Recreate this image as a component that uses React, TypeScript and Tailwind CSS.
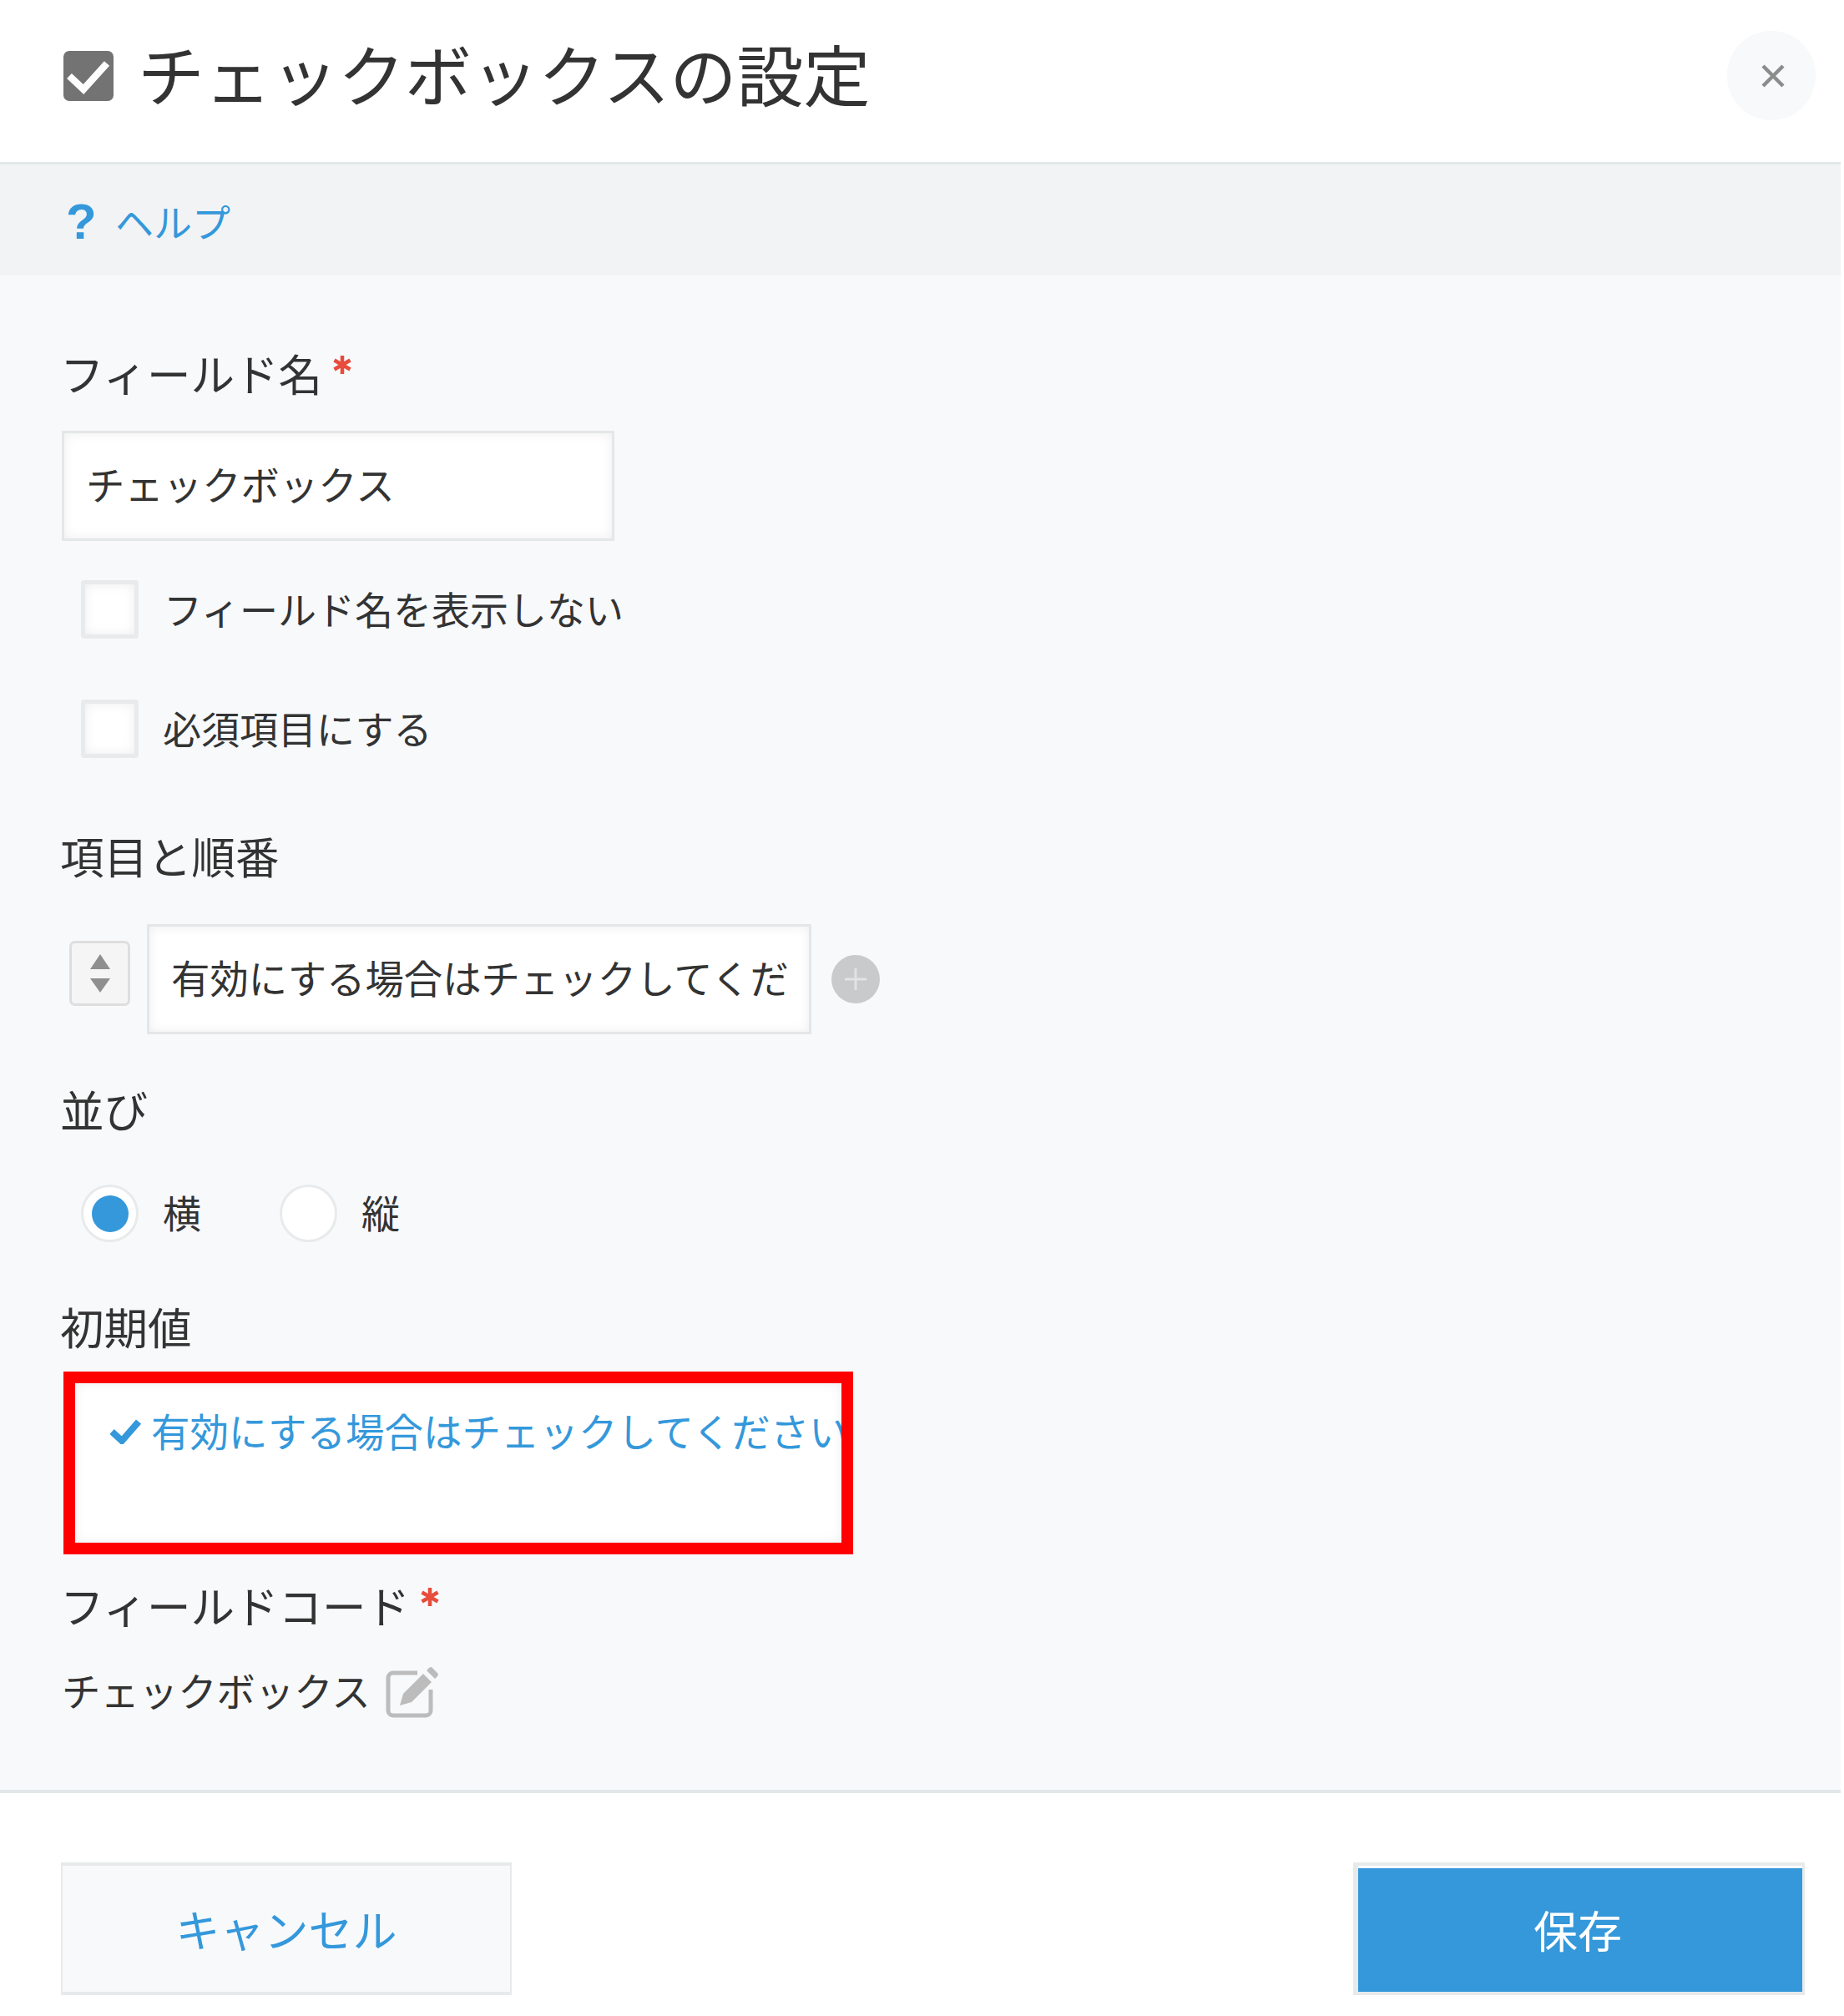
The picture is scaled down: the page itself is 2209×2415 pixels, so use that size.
const inputShadow = 'shadow-[inset_0_0_14px_rgba(0,0,0,0.07)]';

function FieldLabel({ text, required, className }: { text: string; required?: boolean; className: string }) {
  return (
    <div className={`-ml-[2px] flex h-[60px] items-center text-[52.5px] leading-[60px] ${className}`}>
      <span>{text}</span>
      {required && (
        <svg className="mb-[18px] ml-[13px] h-[22px] w-[22px]" viewBox="0 0 22 22" fill="none" stroke="#e74c3c" strokeWidth="4.5">
          <path d="M11 0v22M1.5 5.5l19 11M20.5 5.5l-19 11" />
        </svg>
      )}
    </div>
  );
}

function CheckRow({ text, className, labelClass }: { text: string; className: string; labelClass: string }) {
  return (
    <label className={`flex items-center ${className}`}>
      <span className={`h-[70px] w-[69px] rounded-[4px] border-[5px] border-[#e8eaeb] bg-white ${inputShadow}`} />
      <span className={`mb-[5px] text-[46px] leading-[60px] ${labelClass}`}>{text}</span>
    </label>
  );
}

function Radio({ checked, text, className }: { checked?: boolean; text: string; className: string }) {
  return (
    <label className={`flex items-center ${className}`}>
      <span className="flex h-[69px] w-[69px] items-center justify-center rounded-full border-[3px] border-[#e8eaeb] bg-white">
        {checked && <span className="h-[44px] w-[44px] rounded-full bg-[#3498db]" />}
      </span>
      <span className="mb-[5px] ml-[29px] text-[46px] leading-[60px]">{text}</span>
    </label>
  );
}

export default function App() {
  return (
    <div className="flex h-[2415px] w-[2205px] flex-col bg-white text-[#333333] [font-family:'Noto_Sans_CJK_JP','Noto_Sans',sans-serif]">
      <header className="flex h-[197px] shrink-0 items-start border-b-[3px] border-[#e3e7e8] pl-[76px]">
        <svg className="mt-[61px] h-[60px] w-[60px] shrink-0" viewBox="0 0 60 60">
          <rect width="60" height="60" rx="7" fill="#737373" />
          <path d="M7 30l17 16L52 15" fill="none" stroke="#fff" strokeWidth="8.5" />
        </svg>
        <h1 className="mt-[42px] ml-[29px] text-[80px] leading-[88px] whitespace-nowrap">チェックボックスの設定</h1>
        <button type="button" className="mt-[37px] ml-auto mr-[30px] flex h-[107px] w-[106px] items-center justify-center rounded-full bg-[#f7f9fa] pl-[4px]">
          <svg className="h-[28px] w-[28px]" viewBox="0 0 28 28" stroke="#8c8c8c" strokeWidth="4.5">
            <path d="M2 2l24 24M26 2L2 26" />
          </svg>
        </button>
      </header>

      <div className="flex h-[133px] shrink-0 items-center bg-[#f2f3f5] pl-[79px] text-[#3498db]">
        <span className="mt-[5px] w-[59px] text-[60px] leading-[60px] font-bold [font-family:'Liberation_Sans',sans-serif]">?</span>
        <a className="text-[46px] leading-[60px]">ヘルプ</a>
      </div>

      <main className="flex h-[1814px] shrink-0 flex-col bg-[#f7f9fb] pl-[74px]">
        <FieldLabel text="フィールド名" required className="mt-[86px]" />
        <div className={`mt-[40px] flex h-[132px] w-[662px] items-center border-[3px] border-[#e3e7e8] bg-white pb-[6px] pl-[26px] text-[46.4px] ${inputShadow}`}>
          チェックボックス
        </div>

        <CheckRow text="フィールド名を表示しない" className="mt-[47px] ml-[23px]" labelClass="ml-[30px]" />
        <CheckRow text="必須項目にする" className="mt-[73px] ml-[23px]" labelClass="ml-[29px]" />

        <FieldLabel text="項目と順番" className="mt-[86px]" />
        <div className="mt-[53px] flex items-start">
          <div className="mt-[20px] ml-[9px] flex h-[78px] w-[73px] flex-col items-center rounded-[7px] border-[3px] border-[#dedede] bg-[#f5f5f5] pt-[13px]">
            <svg className="h-[46px] w-[26px]" viewBox="0 0 26 46" fill="#8f8f8f">
              <path d="M13 0l12 18H1zM1 29h24L13 46z" />
            </svg>
          </div>
          <div className={`ml-[20px] flex h-[132px] w-[796px] items-center overflow-hidden border-[3px] border-[#e3e7e8] bg-white pb-[6px] pl-[26px] text-[46.4px] whitespace-nowrap ${inputShadow}`}>
            有効にする場合はチェックしてくだ
          </div>
          <button type="button" className="mt-[37px] ml-[24px] flex h-[58px] w-[58px] items-center justify-center rounded-full bg-[#c9cacb]">
            <svg className="h-[30px] w-[30px]" viewBox="0 0 30 30" stroke="#e2e3e4" strokeWidth="3">
              <path d="M15 2v26M2 15h26" />
            </svg>
          </button>
        </div>

        <FieldLabel text="並び" className="mt-[59px]" />
        <div className="mt-[61px] flex">
          <Radio checked text="横" className="ml-[23px]" />
          <Radio text="縦" className="ml-[94px]" />
        </div>

        <FieldLabel text="初期値" className="mt-[70px]" />
        <div className="mt-[25px] ml-[2px] h-[219px] w-[946px] overflow-hidden border-[14px] border-[#ff0000] bg-white">
          <div className={`flex h-full items-start pt-[26px] pl-[42px] text-[46.5px] leading-[60px] whitespace-nowrap text-[#3498db] ${inputShadow}`}>
            <svg className="mt-[17px] mr-[12px] h-[30px] w-[37px] shrink-0" viewBox="0 0 37 30" fill="none" stroke="#3498db" strokeWidth="8">
              <path d="M2 15l12 11L34 3" />
            </svg>
            有効にする場合はチェックしてください
          </div>
        </div>

        <FieldLabel text="フィールドコード" required className="mt-[30px]" />
        <div className="mt-[44px] flex h-[60px] items-center text-[46.4px] leading-[60px]">
          <span className="mb-[5px]">チェックボックス</span>
          <svg className="mb-[-2px] ml-[18px] h-[62px] w-[65px]" viewBox="0 0 65 62" fill="none">
            <path d="M38 8H9a6 6 0 0 0-6 6v39a6 6 0 0 0 6 6h39a6 6 0 0 0 6-6V28" stroke="#bcbcbc" strokeWidth="5" />
            <path d="M17 47l4-14L45 9l10 10-24 24zM49 5l3-3a3 3 0 0 1 4 0l6 6a3 3 0 0 1 0 4l-3 3z" fill="#bcbcbc" />
          </svg>
        </div>
      </main>

      <footer className="flex flex-1 items-start justify-between border-t-[4px] border-[#e3e7e8] pt-[83px] pl-[73px] pr-[43px]">
        <button type="button" className="h-[159px] w-[540px] border-x-[2px] border-y-[4px] border-[#e7eaeb] bg-[#f7f9fb] text-[53px] text-[#3498db]">
          キャンセル
        </button>
        <button type="button" className="h-[159px] w-[541px] border-y-[4px] border-r-[3px] border-l-[6px] border-[#e7eaeb] bg-white pt-[3px] text-[53px] text-white">
          <span className="flex h-full items-center justify-center bg-[#3498db] pr-[6px]">保存</span>
        </button>
      </footer>
    </div>
  );
}
